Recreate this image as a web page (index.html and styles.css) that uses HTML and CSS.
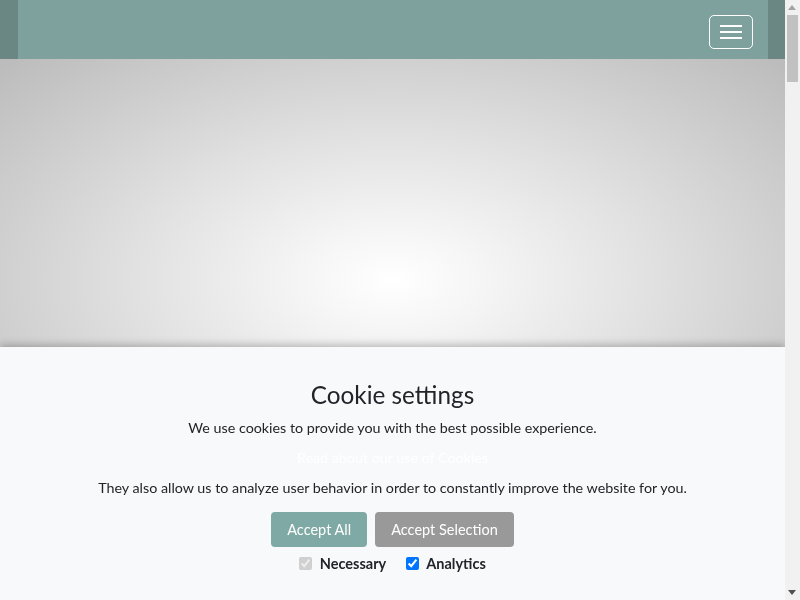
FILE: index.html
```html
<!DOCTYPE html>
<html lang="en">
	<head>
		<meta charset="UTF-8" />
		<meta name="viewport" content="width=device-width, initial-scale=1.0" />
		<title>Cookie settings</title>
		<link rel="stylesheet" href="styles.css">
	</head>
	<body>
		<div class="page">
			<header class="topbar">
				<nav class="topbar-inner">
					<button class="menu-toggle" type="button" aria-label="Menu">
						<span class="bar"></span>
						<span class="bar"></span>
						<span class="bar"></span>
					</button>
				</nav>
			</header>

			<section class="hero"></section>
		</div>

		<div class="scrollbar">
			<span class="arrow arrow-up"></span>
			<span class="thumb"></span>
			<span class="arrow arrow-down"></span>
		</div>

		<div class="cookie-banner">
			<h2>Cookie settings</h2>
			<p>We use cookies to provide you with the best possible experience.</p>
			<p><a href="#" class="cookie-link">Read about our use of Cookies</a></p>
			<p>They also allow us to analyze user behavior in order to constantly improve the website for you.</p>
			<div class="cookie-buttons">
				<button type="button" class="btn btn-accept">Accept All</button>
				<button type="button" class="btn btn-selection">Accept Selection</button>
			</div>
			<div class="cookie-options">
				<label><input type="checkbox" checked disabled /> Necessary</label>
				<label><input type="checkbox" checked /> Analytics</label>
			</div>
		</div>
	</body>
</html>
```

FILE: styles.css
```css
body,
h2,
p {
	margin: 0;
	padding: 0;
}

body {
	font-family: Lato, "Liberation Sans", sans-serif;
	color: #212529;
	background-color: #fff;
	overflow: hidden;
}

.page {
	margin-right: 15px;
}

.topbar {
	background-color: #6b8784;
}

.topbar-inner {
	width: 750px;
	height: 59px;
	margin: 0 auto;
	padding: 0 15px;
	box-sizing: border-box;
	background-color: #7ea19d;
	display: flex;
	justify-content: flex-end;
	align-items: center;
}

.menu-toggle {
	width: 44px;
	height: 34px;
	margin-top: 5px;
	padding: 0 10px;
	background: transparent;
	border: 1px solid #fff;
	border-radius: 5px;
	display: flex;
	flex-direction: column;
	justify-content: center;
	gap: 4px;
	cursor: pointer;
}

.menu-toggle .bar {
	display: block;
	width: 22px;
	height: 2px;
	background-color: #fff;
}

.hero {
	height: 442px;
	background: radial-gradient(ellipse at center, #ffffff 0%, #f6f6f6 15%, #e2e2e2 45%, #bbbbbb 100%);
}

/* fake browser scrollbar */
.scrollbar {
	position: fixed;
	top: 0;
	right: 0;
	bottom: 0;
	width: 15px;
	background-color: #f1f1f1;
	z-index: 5;
}

.scrollbar .thumb {
	position: absolute;
	top: 15px;
	left: 2px;
	width: 11px;
	height: 67px;
	background-color: #c1c1c1;
}

.scrollbar .arrow {
	position: absolute;
	left: 3px;
	width: 0;
	height: 0;
	border-left: 4.5px solid transparent;
	border-right: 4.5px solid transparent;
}

.arrow-up {
	top: 5px;
	border-bottom: 5px solid #a3a3a3;
}

.arrow-down {
	bottom: 5px;
	border-top: 5px solid #505050;
}

.cookie-banner {
	position: fixed;
	left: 0;
	right: 15px;
	bottom: 0;
	height: 253px;
	background-color: #f8f9fa;
	box-shadow: 0 -2px 8px rgba(0, 0, 0, 0.25);
	text-align: center;
	padding-top: 30px;
	box-sizing: border-box;
}

.cookie-banner h2 {
	font-size: 24.3px;
	font-weight: 400;
	line-height: 36px;
	margin-bottom: 0;
}

.cookie-banner p {
	font-size: 14.3px;
	line-height: 30px;
}

.cookie-link {
	color: #fff;
	text-decoration: none;
}

.cookie-buttons {
	display: flex;
	justify-content: center;
	gap: 8px;
	margin-top: 9px;
}

.btn {
	height: 35px;
	padding: 0 16px;
	border: none;
	border-radius: 4px;
	color: #fff;
	font-family: inherit;
	font-size: 14.5px;
	cursor: pointer;
}

.btn-accept {
	background-color: #7fa9a4;
}

.btn-selection {
	background-color: #999999;
}

.cookie-options {
	display: flex;
	justify-content: center;
	gap: 20px;
	margin-top: 8px;
	font-size: 14.5px;
	font-weight: 700;
}

.cookie-options input {
	margin: 0 4px 0 0;
	vertical-align: -1px;
}
```
